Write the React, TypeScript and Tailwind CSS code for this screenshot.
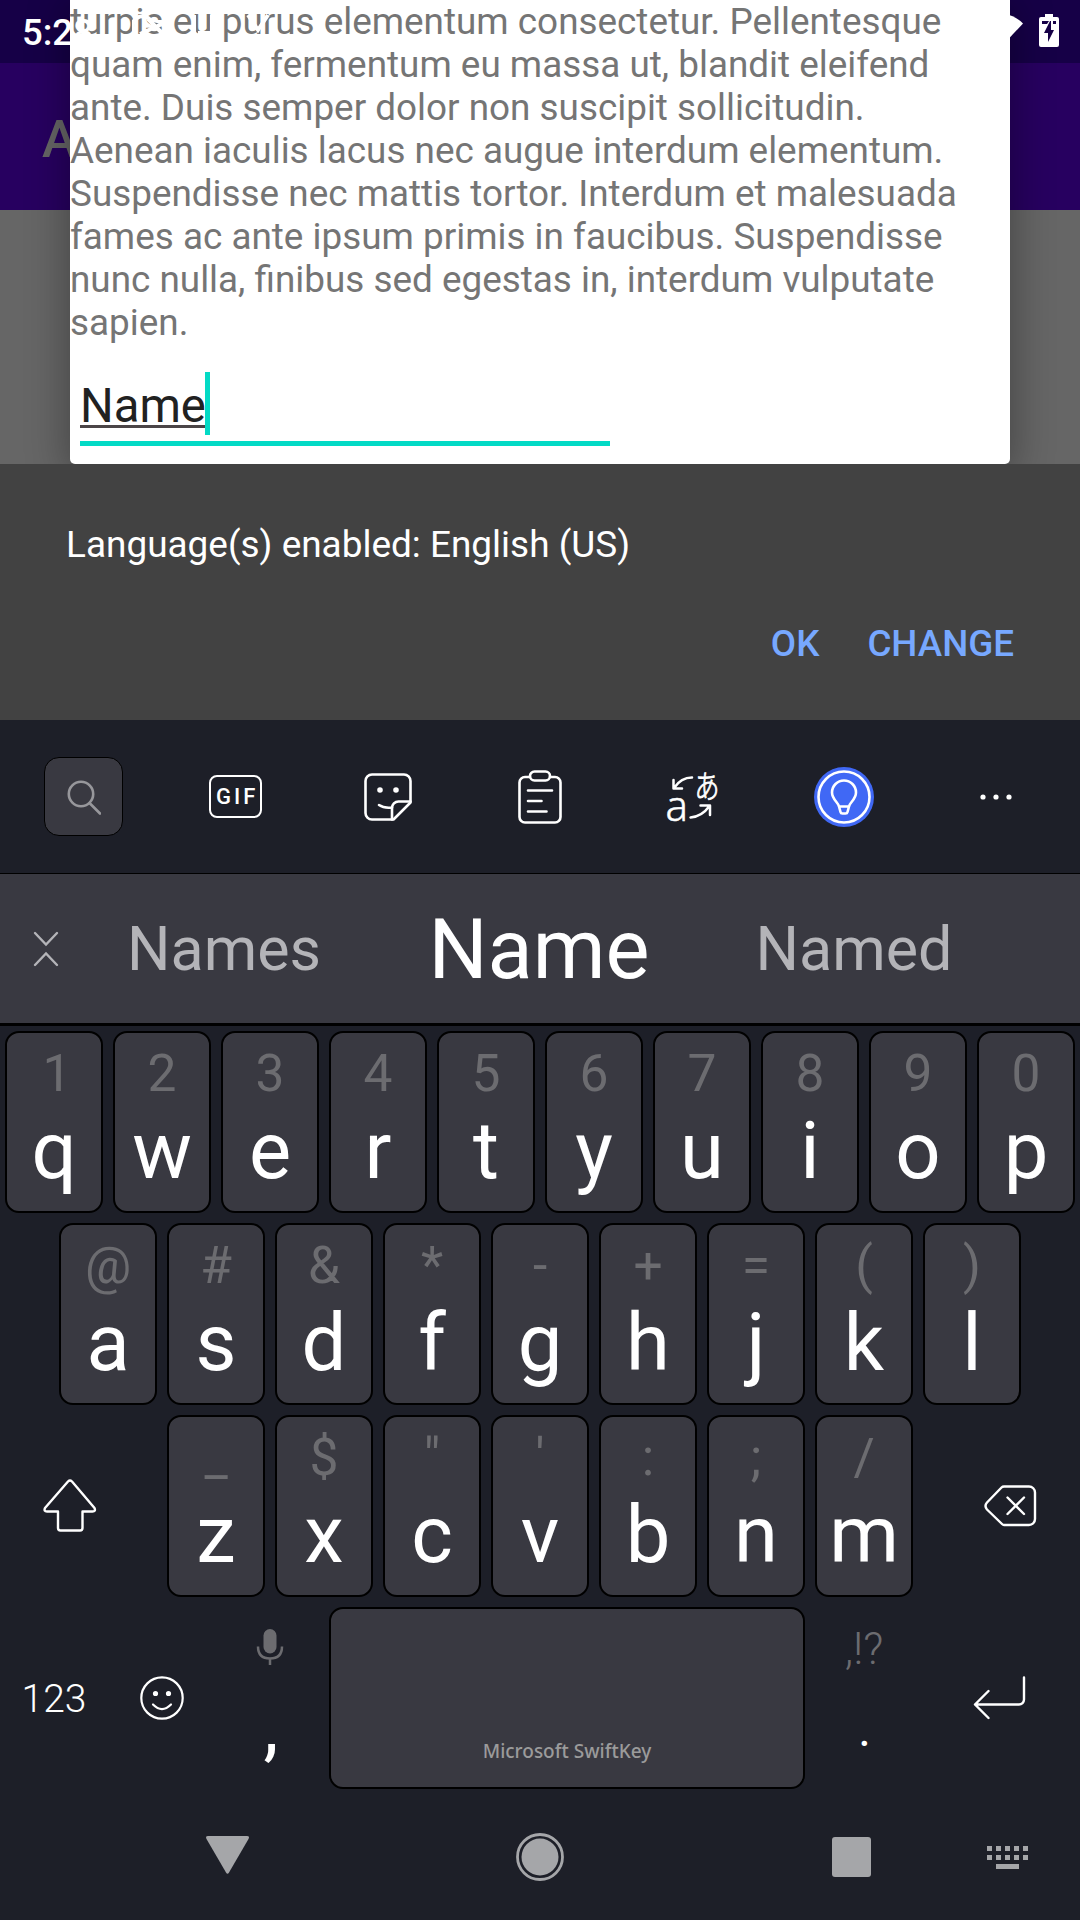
import React from "react";

const KEY_BOX =
  "box-border flex h-[182px] w-[98px] shrink-0 flex-col items-center rounded-[14px] border-2 border-black bg-[#393941]";

type KeyDef = [hint: string, letter: string];

const ROW_1: KeyDef[] = [
  ["1", "q"], ["2", "w"], ["3", "e"], ["4", "r"], ["5", "t"],
  ["6", "y"], ["7", "u"], ["8", "i"], ["9", "o"], ["0", "p"],
];
const ROW_2: KeyDef[] = [
  ["@", "a"], ["#", "s"], ["&", "d"], ["*", "f"], ["-", "g"],
  ["+", "h"], ["=", "j"], ["(", "k"], [")", "l"],
];
const ROW_3: KeyDef[] = [
  ["_", "z"], ["$", "x"], ['"', "c"], ["'", "v"], [":", "b"], [";", "n"], ["/", "m"],
];

const PARAGRAPH = [
  "turpis eu purus elementum consectetur. Pellentesque",
  "quam enim, fermentum eu massa ut, blandit eleifend",
  "ante. Duis semper dolor non suscipit sollicitudin.",
  "Aenean iaculis lacus nec augue interdum elementum.",
  "Suspendisse nec mattis tortor. Interdum et malesuada",
  "fames ac ante ipsum primis in faucibus. Suspendisse",
  "nunc nulla, finibus sed egestas in, interdum vulputate",
  "sapien.",
];

function Key({ hint, letter }: { hint: string; letter: string }) {
  return (
    <div className={KEY_BOX}>
      <span className={`mt-[15px] h-[52px] text-[51.5px] leading-[52px] text-[#6c6c70] ${hint === "1" ? "pl-[6px]" : ""}`}>
        {hint}
      </span>
      <span className="mt-[11px] text-[79.5px] leading-[80px] text-white">{letter}</span>
    </div>
  );
}

function Letters({ keys }: { keys: KeyDef[] }) {
  return (
    <div className="flex gap-[10px]">
      {keys.map(([hint, letter]) => (
        <Key key={letter} hint={hint} letter={letter} />
      ))}
    </div>
  );
}

function StatusBar() {
  return (
    <div className="absolute inset-x-0 top-0 z-20 flex h-[63px] items-start justify-between pl-[22px] pr-[21px] text-white">
      <div className="flex items-start">
        <span className="mt-[11px] text-[36.5px] font-medium leading-[43px]">5:28</span>
        <svg className="ml-[38px] mt-[12px]" width="140" height="26" viewBox="0 0 140 26" fill="none" stroke="#fff" strokeWidth="4">
          <path d="M2 20a9 9 0 0 1 17-11M8 22l22-10M16 7l14 14" />
          <path d="M62 22V3M66 21h14V3" />
          <path d="M116 3l10 15 10-15" />
        </svg>
      </div>
      <div className="mt-[14px] flex items-start gap-[16px]">
        <svg width="46" height="35" viewBox="0 0 46 35" fill="#fff">
          <path d="M23 34L0 8a33 33 0 0 1 46 1.500z" />
        </svg>
        <svg className="-mt-px" width="20" height="36" viewBox="0 0 20 36">
          <path d="M6 1h8v3h4q2 0 2 2v26q0 2-2 2H2q-2 0-2-2V6q0-2 2-2h4z" fill="#fff" />
          <path d="M3 8h7l-2 3H3zM14 8h3v3h-3zM11 8l1 0v9h3L9 29v-9H5z" fill="#160047" />
        </svg>
      </div>
    </div>
  );
}

function Dialog() {
  return (
    <div className="absolute left-[70px] top-0 z-10 h-[464px] w-[940px] rounded-b-[5px] bg-white shadow-[0_8px_40px_4px_rgba(0,0,0,0.32)]">
      <div className="whitespace-nowrap text-[36.87px] leading-[43px] text-[#757575]">
        {PARAGRAPH.map((line) => (
          <p key={line}>{line}</p>
        ))}
      </div>
      <div className="ml-[10px] mt-[28px] flex h-[74px] w-[530px] items-start border-b-[5px] border-[#03dac5]">
        <div className="mt-[11px] h-[45px] border-b-3 border-[#4b4547] text-[47.25px] leading-[46px] text-[#212121]">Name</div>
        <div className="-ml-[1px] h-[63px] w-[5px] bg-[#03dac5]" />
      </div>
    </div>
  );
}

function Toolbar() {
  return (
    <div className="grid h-[154px] grid-cols-7 items-center justify-items-center border-b border-black px-[7.5px]">
      <div className="box-border flex h-[79px] w-[79px] items-center justify-center rounded-[15px] border border-black bg-[#393941]">
        <svg width="34" height="36" viewBox="0 0 34 36" fill="none" stroke="#97979b" strokeWidth="2.6" strokeLinecap="round">
          <circle cx="14" cy="15" r="12.2" />
          <path d="M23 24.5L33 34.5" />
        </svg>
      </div>
      <div className="box-border flex h-[43px] w-[53px] items-center justify-center rounded-[8px] border-[2.5px] border-white text-[22px] font-medium leading-none tracking-[3px] text-white">
        <span className="-mr-[3px]">GIF</span>
      </div>
      <svg width="48" height="48" viewBox="0 0 48 48" fill="none" stroke="#fff" strokeWidth="2.6" strokeLinecap="round" strokeLinejoin="round">
        <path d="M8 1.500h32a6.500 6.500 0 0 1 6.500 6.500v21.500L29.500 46.500H8A6.500 6.500 0 0 1 1.500 40V8A6.500 6.500 0 0 1 8 1.500z" />
        <path d="M46.500 28.500H34.500a6.500 6.500 0 0 0-6.500 6.500v11.500" />
        <path d="M15 32q5 3.500 13 2.500" />
        <circle cx="16" cy="17" r="1.500" fill="#fff" />
        <circle cx="32" cy="17" r="1.500" fill="#fff" />
      </svg>
      <svg width="44" height="54" viewBox="0 0 44 54" fill="none" stroke="#fff" strokeWidth="2.6" strokeLinecap="round" strokeLinejoin="round">
        <path d="M12 7H7a5.500 5.500 0 0 0-5.500 5.500V47A5.500 5.500 0 0 0 7 52.500h30a5.500 5.500 0 0 0 5.500-5.500V12.500A5.500 5.500 0 0 0 37 7h-5" />
        <rect x="12" y="1.500" width="20" height="9" rx="4.500" />
        <path d="M10 20.500h24M10 31h13.500M10 41.500h18.500" />
      </svg>
      <svg width="54" height="56" viewBox="0 0 54 56" fill="none" stroke="#fff" strokeWidth="2.5" strokeLinecap="round" strokeLinejoin="round">
        <text x="0.500" y="51.500" fill="#fff" stroke="#fff" strokeWidth="0.500" fontSize="42" fontFamily="Noto Sans" fontWeight="300" textLength="22.500" lengthAdjust="spacingAndGlyphs">a</text>
        <text transform="translate(29.500 28.500) scale(0.980 1.260)" x="0" y="0" fill="#fff" stroke="#fff" strokeWidth="0.700" fontSize="25.500" fontFamily="Noto Sans CJK JP" fontWeight="300">あ</text>
        <path d="M8.500 11v8.500H17M9 19Q16 8.500 27 8.500" />
        <path d="M35.500 36.500H45V46M44.500 37Q37 47.500 25.500 48.500" />
      </svg>
      <svg width="60" height="60" viewBox="0 0 60 60" fill="none" stroke="#fff" strokeWidth="2.6" strokeLinejoin="round">
        <circle cx="30" cy="30" r="30" fill="#4068f5" stroke="none" />
        <circle cx="30" cy="30" r="25.500" />
        <path d="M25 39.500c-.500-4-7-7-7-14a12 12 0 0 1 24 0c0 7-6.500 10-7 14l-1.500 5.500q-.300 1.500-2 1.500h-3q-1.700 0-2-1.500zM25 39.500h10" />
      </svg>
      <svg width="34" height="8" viewBox="0 0 34 8" fill="#fff">
        <circle cx="4" cy="4" r="2.600" />
        <circle cx="17" cy="4" r="2.600" />
        <circle cx="30" cy="4" r="2.600" />
      </svg>
    </div>
  );
}

function Suggestions() {
  return (
    <div className="grid h-[152px] grid-cols-[89px_270px_360px_270px] border-b-3 border-black bg-[#393941] text-center text-[61px] text-[#b4b4b8]">
      <svg className="ml-[33px] mt-[56px]" width="26" height="38" viewBox="0 0 26 38" fill="none" stroke="#b4b4b8" strokeWidth="2.4" strokeLinecap="round">
        <path d="M2 3l11 11.500L24 3M2 35l11-11.500L24 35" />
      </svg>
      <span className="mt-[45px] leading-[61px]">Names</span>
      <span className="mt-[34px] text-[83px] leading-[83px] text-white">Name</span>
      <span className="mt-[45px] leading-[61px]">Named</span>
    </div>
  );
}

function BottomRow() {
  return (
    <div className="flex h-[182px] text-white">
      <div className="flex w-[108px] items-center justify-center pt-[2px] text-[39px] font-light">123</div>
      <div className="flex w-[108px] items-center justify-center">
        <svg width="44" height="44" viewBox="0 0 44 44" fill="none" stroke="#fff" strokeWidth="2.2" strokeLinecap="round">
          <circle cx="22" cy="22" r="20.700" />
          <path d="M13 28.500q9 9 18 0" />
          <circle cx="15.500" cy="17.500" r="1.500" fill="#fff" />
          <circle cx="28.500" cy="17.500" r="1.500" fill="#fff" />
        </svg>
      </div>
      <div className="flex w-[108px] flex-col items-center">
        <svg className="mt-[22px]" width="28" height="37" viewBox="0 0 28 37">
          <rect x="7.500" y="0" width="13" height="24.500" rx="6.500" fill="#6c6c70" />
          <path d="M2 17.500q0 12 12 12t12-12M14 29.500V36" fill="none" stroke="#6c6c70" strokeWidth="2.500" />
        </svg>
        <span className="mt-[20px] pl-[2px] text-[76px] leading-[80px]">,</span>
      </div>
      <div className="ml-[5px] box-border flex h-[182px] w-[476px] shrink-0 items-end justify-center rounded-[14px] border-2 border-black bg-[#393941] pb-[26px] font-['Noto_Sans'] text-[19px] font-medium leading-[20px] text-[#9b9b9b]">
        Microsoft SwiftKey
      </div>
      <div className="ml-[5px] flex w-[108px] flex-col items-center font-light">
        <span className="mt-[20px] text-[44px] leading-[44px] text-[#6c6c70]">,!?</span>
        <span className="mt-[35px] pl-[1px] text-[48px] font-normal leading-[48px]">.</span>
      </div>
      <div className="flex flex-1 items-center justify-center">
        <svg className="-ml-[1px]" width="54" height="46" viewBox="0 0 54 46" fill="none" stroke="#fff" strokeWidth="2.400" strokeLinecap="round" strokeLinejoin="round">
          <path d="M52 2.500V24.500a5 5 0 0 1-5 5H3M16.500 16L3 29.500 16.500 43" />
        </svg>
      </div>
    </div>
  );
}

function NavBar() {
  return (
    <div className="flex h-[131px] items-start pt-[5px] text-[#a5a6a9]">
      <svg className="ml-[205px] mt-[41px]" width="45" height="40" viewBox="0 0 45 40" fill="currentColor">
        <path d="M3 1h39q3 0 1.500 3L24 37.500q-1.500 2.500-3 0L1.500 4Q0 1 3 1z" />
      </svg>
      <svg className="ml-[265px] mt-[38px]" width="50" height="50" viewBox="0 0 50 50">
        <circle cx="25" cy="25" r="22.500" fill="none" stroke="currentColor" strokeWidth="2.800" />
        <circle cx="25" cy="25" r="18.500" fill="currentColor" />
      </svg>
      <div className="ml-[267px] mt-[43px] h-[40px] w-[39px] rounded-[3px] bg-[#a5a6a9]" />
      <svg className="ml-[116px] mt-[52px]" width="41" height="23" viewBox="0 0 41 23" fill="currentColor">
        <path d="M0 0h5v5H0zM9 0h5v5H9zM18 0h5v5h-5zM27 0h5v5h-5zM36 0h5v5h-5zM0 9h5v5H0zM9 9h5v5H9zM18 9h5v5h-5zM27 9h5v5h-5zM36 9h5v5h-5zM9 18h23v5H9z" />
      </svg>
    </div>
  );
}

export default function App() {
  return (
    <div className="flex h-[1920px] w-[1080px] flex-col overflow-hidden bg-[#1d1f28] font-['Roboto',sans-serif]">
      <div className="relative h-[464px] shrink-0 overflow-hidden bg-[#666666]">
        <div className="h-[63px] bg-[#160047]" />
        <div className="h-[147px] bg-[#270060] pl-[42px] pt-[46px] text-[52.5px] font-medium leading-[61px] text-[#666666]">A</div>
        <Dialog />
        <StatusBar />
      </div>
      <div className="flex h-[256px] shrink-0 flex-col bg-[#424242] text-[36.75px] leading-[43px]">
        <p className="mt-[59px] pl-[66px] text-[36.95px] text-white">Language(s) enabled: English (US)</p>
        <div className="mt-[56px] flex justify-end gap-[48px] pr-[66px] font-medium text-[#77a8ff]">
          <span>OK</span>
          <span>CHANGE</span>
        </div>
      </div>
      <Toolbar />
      <Suggestions />
      <div className="flex flex-col gap-[10px] pt-[5px]">
        <div className="flex pl-[5px]">
          <Letters keys={ROW_1} />
        </div>
        <div className="flex pl-[59px]">
          <Letters keys={ROW_2} />
        </div>
        <div className="flex items-center">
          <div className="flex w-[167px] shrink-0 pl-[43px]">
            <svg width="54" height="56" viewBox="0 0 54 56" fill="none" stroke="#fff" strokeWidth="2.400" strokeLinejoin="round">
              <path d="M25 3.500Q27 1.500 29 3.500L51.500 30q1.500 3.500-2 3.500H39.500V50q0 2.500-2.500 2.500H17.500Q15 52.500 15 50V33.500H4Q.500 33.500 2 30z" />
            </svg>
          </div>
          <Letters keys={ROW_3} />
          <svg className="ml-[71px]" width="53" height="42" viewBox="0 0 53 42" fill="none" stroke="#fff" strokeWidth="2.400" strokeLinecap="round" strokeLinejoin="round">
            <path d="M20 1.500h25a6 6 0 0 1 6 6v26.500a6 6 0 0 1-6 6H20q-1 0-2-1L3 24.500q-3-3.500 0-7L17.500 2.500q1-1 2.500-1z" />
            <path d="M23.500 12.500l16.500 16.500M40 12.500L23.500 29" />
          </svg>
        </div>
        <BottomRow />
      </div>
      <NavBar />
    </div>
  );
}
